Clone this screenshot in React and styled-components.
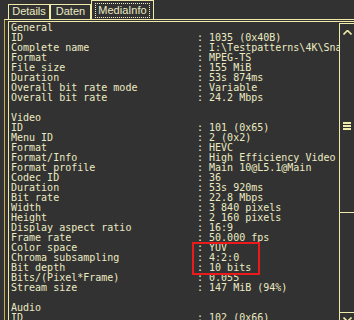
import styled, { createGlobalStyle } from 'styled-components';

const LINE = '#f1ebab';
const TEXT = '#ecebc2';
const BG = '#323232';

const GlobalStyle = createGlobalStyle`
  html, body {
    margin: 0;
    padding: 0;
    background: ${BG};
    overflow: hidden;
  }
  * {
    box-sizing: border-box;
  }
`;

const sections = [
  {
    title: 'General',
    rows: [
      ['ID', '1035 (0x40B)'],
      ['Complete name', 'I:\\Testpatterns\\4K\\Snake River 4K.ts'],
      ['Format', 'MPEG-TS'],
      ['File size', '155 MiB'],
      ['Duration', '53s 874ms'],
      ['Overall bit rate mode', 'Variable'],
      ['Overall bit rate', '24.2 Mbps'],
    ],
  },
  {
    title: 'Video',
    rows: [
      ['ID', '101 (0x65)'],
      ['Menu ID', '2 (0x2)'],
      ['Format', 'HEVC'],
      ['Format/Info', 'High Efficiency Video Coding'],
      ['Format profile', 'Main 10@L5.1@Main'],
      ['Codec ID', '36'],
      ['Duration', '53s 920ms'],
      ['Bit rate', '22.8 Mbps'],
      ['Width', '3 840 pixels'],
      ['Height', '2 160 pixels'],
      ['Display aspect ratio', '16:9'],
      ['Frame rate', '50.000 fps'],
      ['Color space', 'YUV', true],
      ['Chroma subsampling', '4:2:0', true],
      ['Bit depth', '10 bits', true],
      ['Bits/(Pixel*Frame)', '0.055'],
      ['Stream size', '147 MiB (94%)'],
    ],
  },
  {
    title: 'Audio',
    rows: [['ID', '102 (0x66)']],
  },
];

const Window = styled.div`
  width: 354px;
  height: 320px;
  overflow: hidden;
  background: ${BG};
  display: flex;
  flex-direction: column;
`;

const TabBar = styled.div`
  height: 19px;
  padding-left: 8px;
  display: flex;
  align-items: flex-end;
  flex-shrink: 0;
`;

const Tab = styled.div`
  width: ${(p) => p.$w}px;
  height: ${(p) => (p.$active ? 19 : 15)}px;
  border: 1px solid ${LINE};
  border-bottom: none;
  display: flex;
  justify-content: center;
  align-items: ${(p) => (p.$active ? 'flex-start' : 'stretch')};
  padding-top: ${(p) => (p.$active ? 2 : 0)}px;
  font-family: 'Liberation Sans', Arial, sans-serif;
  font-size: 11px;
  line-height: 13px;
  color: ${TEXT};
`;

const FocusLabel = styled.span`
  display: block;
  height: 15px;
  padding: 0 2px;
  border: 1px dotted ${TEXT};
  line-height: 12px;
`;

const Panel = styled.div`
  flex: 1;
  min-height: 0;
  margin-left: 4px;
  padding: 1px 0 0 3px;
  border-top: 1px solid ${LINE};
  border-left: 1px solid #d3ac4c;
  display: flex;
`;

const InfoBox = styled.div`
  flex: 1;
  min-width: 0;
  border-top: 1px solid ${LINE};
  border-left: 1px solid ${LINE};
  display: flex;
`;

const Content = styled.div`
  flex: 1;
  min-width: 0;
  overflow: hidden;
  padding: 1px 0 0 2px;
  font-family: 'DejaVu Sans Mono', 'Liberation Mono', monospace;
  font-size: 10px;
  line-height: 10px;
  color: ${TEXT};
  white-space: pre;
`;

const Line = styled.div`
  height: 10px;
  display: flex;
`;

const Label = styled.span`
  width: 186px;
  flex-shrink: 0;
`;

const Highlighted = styled.div`
  position: relative;
`;

const Marker = styled.div`
  position: absolute;
  top: -1px;
  left: 181px;
  width: 68px;
  height: 33px;
  border: 2px solid #ec1a1a;
`;

const Scrollbar = styled.div`
  width: 15px;
  flex-shrink: 0;
  margin-top: 1px;
  border-top: 1px solid ${LINE};
  border-left: 1px solid ${LINE};
  display: flex;
  flex-direction: column;
`;

const ArrowBox = styled.div`
  height: ${(p) => p.$h}px;
  padding-top: ${(p) => p.$pad}px;
  display: flex;
  justify-content: center;
  flex-shrink: 0;
`;

const Thumb = styled.div`
  height: 173px;
  border-bottom: 1px solid ${LINE};
  display: flex;
  flex-direction: column;
  justify-content: center;
  align-items: center;
  gap: 1px;
  flex-shrink: 0;
`;

const GripBar = styled.div`
  width: 8px;
  height: 2px;
  background: ${LINE};
`;

const Track = styled.div`
  height: 100px;
  border-bottom: 1px solid ${LINE};
  flex-shrink: 0;
`;

function Chevron({ down }) {
  return (
    <svg width="9" height="5" viewBox="0 0 9 5">
      <path
        d={down ? 'M0.5 0.5 L4.5 4.5 L8.5 0.5' : 'M0.5 4.5 L4.5 0.5 L8.5 4.5'}
        fill="none"
        stroke={LINE}
        strokeWidth="1.6"
      />
    </svg>
  );
}

function InfoLine({ label, value }) {
  return (
    <Line>
      <Label>{label}</Label>
      <span>: {value}</span>
    </Line>
  );
}

function Section({ title, rows, last }) {
  const before = [];
  const marked = [];
  const after = [];
  rows.forEach((r) => {
    if (r[2]) marked.push(r);
    else if (marked.length) after.push(r);
    else before.push(r);
  });
  return (
    <>
      <Line>{title}</Line>
      {before.map(([l, v], i) => (
        <InfoLine key={'b' + i} label={l} value={v} />
      ))}
      {marked.length > 0 && (
        <Highlighted>
          {marked.map(([l, v], i) => (
            <InfoLine key={'m' + i} label={l} value={v} />
          ))}
          <Marker />
        </Highlighted>
      )}
      {after.map(([l, v], i) => (
        <InfoLine key={'a' + i} label={l} value={v} />
      ))}
      {!last && <Line />}
    </>
  );
}

export default function App() {
  return (
    <Window>
      <GlobalStyle />
      <TabBar>
        <Tab $w={42}>Details</Tab>
        <Tab $w={41}>Daten</Tab>
        <Tab $w={63} $active>
          <FocusLabel>MediaInfo</FocusLabel>
        </Tab>
      </TabBar>
      <Panel>
        <InfoBox>
          <Content>
            {sections.map((s, i) => (
              <Section key={s.title} {...s} last={i === sections.length - 1} />
            ))}
          </Content>
          <Scrollbar>
            <ArrowBox $h={16} $pad={6}>
              <Chevron />
            </ArrowBox>
            <Thumb>
              <GripBar />
              <GripBar />
              <GripBar />
            </Thumb>
            <Track />
            <ArrowBox $h={20} $pad={4}>
              <Chevron down />
            </ArrowBox>
          </Scrollbar>
        </InfoBox>
      </Panel>
    </Window>
  );
}
